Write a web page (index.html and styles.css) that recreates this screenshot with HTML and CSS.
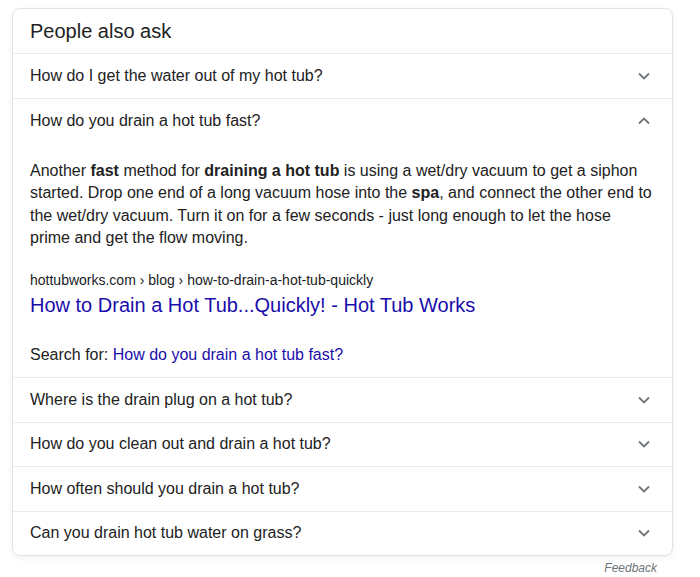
FILE: index.html
```html
<!DOCTYPE html>
<html>
<head>
<meta charset="utf-8">
<link rel="stylesheet" href="styles.css">
</head>
<body>
<div class="page">
  <div class="card">
    <div class="head">People also ask</div>
    <div class="row"><span>How do I get the water out of my hot tub?</span><svg class="chev" viewBox="0 0 12 8"><path d="M1 1.5 L6 6.5 L11 1.5"/></svg></div>
    <div class="open">
      <div class="row q"><span>How do you drain a hot tub fast?</span><svg class="chev" viewBox="0 0 12 8"><path d="M1 6.5 L6 1.5 L11 6.5"/></svg></div>
      <div class="answer">
        <p class="snippet">Another <b>fast</b> method for <b>draining a hot tub</b> is using a wet/dry vacuum to get a siphon started. Drop one end of a long vacuum hose into the <b>spa</b>, and connect the other end to the wet/dry vacuum. Turn it on for a few seconds - just long enough to let the hose prime and get the flow moving.</p>
        <div class="cite">hottubworks.com › blog › how-to-drain-a-hot-tub-quickly</div>
        <a class="title" href="#">How to Drain a Hot Tub...Quickly! - Hot Tub Works</a>
        <div class="search">Search for: <a href="#">How do you drain a hot tub fast?</a></div>
      </div>
    </div>
    <div class="row low"><span>Where is the drain plug on a hot tub?</span><svg class="chev" viewBox="0 0 12 8"><path d="M1 1.5 L6 6.5 L11 1.5"/></svg></div>
    <div class="row low"><span>How do you clean out and drain a hot tub?</span><svg class="chev" viewBox="0 0 12 8"><path d="M1 1.5 L6 6.5 L11 1.5"/></svg></div>
    <div class="row low"><span>How often should you drain a hot tub?</span><svg class="chev" viewBox="0 0 12 8"><path d="M1 1.5 L6 6.5 L11 1.5"/></svg></div>
    <div class="row low"><span>Can you drain hot tub water on grass?</span><svg class="chev" viewBox="0 0 12 8"><path d="M1 1.5 L6 6.5 L11 1.5"/></svg></div>
  </div>
  <div class="feedback">Feedback</div>
</div>
</body>
</html>
```
FILE: styles.css
```css
html, body {
  margin: 0;
  padding: 0;
  background: #fff;
}
body {
  font-family: "Liberation Sans", Arial, sans-serif;
  color: #222;
}
.page {
  padding: 8px 0 0 12px;
  width: 661px;
}
.card {
  border: 1px solid #e2e2e2;
  border-radius: 8px;
  box-shadow: 0 2px 6px rgba(0,0,0,0.06);
  overflow: hidden;
}
.head {
  height: 44px;
  padding-left: 17px;
  font-size: 20px;
  line-height: 44px;
  color: #222;
  border-bottom: 1px solid #ebebeb;
}
.row {
  height: 44px;
  padding: 0 22px 0 17px;
  display: flex;
  align-items: center;
  justify-content: space-between;
  font-size: 16px;
  color: #222;
  border-bottom: 1px solid #ebebeb;
}
.row.low {
  height: 43.5px;
}
.card > .row:last-child {
  border-bottom: none;
}
.open {
  border-bottom: 1px solid #ebebeb;
}
.open .row.q {
  border-bottom: none;
}
.chev {
  width: 12px;
  height: 8px;
  fill: none;
  stroke: #70757a;
  stroke-width: 1.8;
}
.answer {
  padding: 17px 17px 12px 17px;
}
.snippet {
  margin: 0;
  font-size: 16px;
  line-height: 22.3px;
  color: #222;
  width: 624px;
}
.snippet b {
  font-weight: bold;
}
.cite {
  margin-top: 21px;
  font-size: 14px;
  line-height: 20px;
  color: #202124;
}
.title {
  display: block;
  font-size: 20px;
  line-height: 30px;
  color: #1a0dab;
  text-decoration: none;
}
.search {
  margin-top: 25px;
  font-size: 16px;
  line-height: 20px;
  color: #222;
}
.search a {
  color: #1a0dab;
  text-decoration: none;
}
.feedback {
  text-align: right;
  padding-right: 16px;
  margin-top: 5px;
  font-size: 12px;
  font-style: italic;
  color: #70757a;
}
```
